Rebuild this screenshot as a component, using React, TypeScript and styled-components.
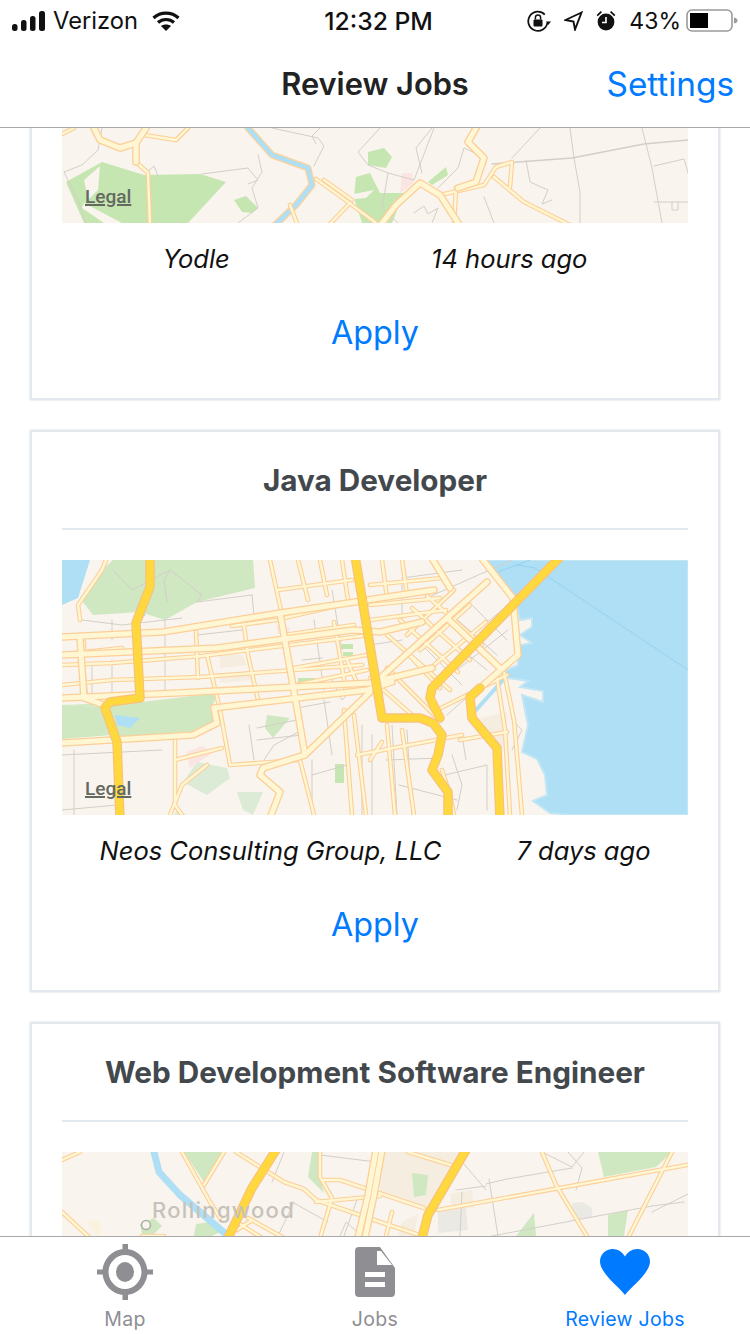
import React from 'react';
import styled, { createGlobalStyle } from 'styled-components';

const UI_FONT = `Inter, "Liberation Sans", sans-serif`;

const GlobalStyle = createGlobalStyle`
  html, body {
    margin: 0;
    padding: 0;
    background: #fff;
  }
  body {
    font-family: ${UI_FONT};
  }
`;

type Pts = number[][];

const toPoints = (line: number[]) => {
  const out: string[] = [];
  for (let i = 0; i < line.length; i += 2) out.push(`${line[i]},${line[i + 1]}`);
  return out.join(' ');
};

const Lines = ({ lines, color, width }: { lines: Pts; color: string; width: number }) => (
  <g fill="none" stroke={color} strokeWidth={width} strokeLinejoin="round" strokeLinecap="round">
    {lines.map((l, i) => (
      <polyline key={i} points={toPoints(l)} />
    ))}
  </g>
);

const Areas = ({ shapes, color }: { shapes: Pts; color: string }) => (
  <g fill={color}>
    {shapes.map((s, i) => (
      <polygon key={i} points={toPoints(s)} />
    ))}
  </g>
);

const Roads = ({ lines, size }: { lines: Pts; size: 'street' | 'main' | 'freeway' }) => {
  if (size === 'freeway') {
    return (
      <>
        <Lines lines={lines} color="#f9c07c" width={9.5} />
        <Lines lines={lines} color="#ffd83e" width={7.2} />
      </>
    );
  }
  return (
    <>
      <Lines lines={lines} color="#fccf98" width={size === 'main' ? 7.6 : 4.6} />
      <Lines lines={lines} color="#fff6d3" width={size === 'main' ? 5 : 2.4} />
    </>
  );
};

const LAND = '#f9f4ed';
const WATER = '#aedff5';
const PARK = '#cfe8c2';
const PARK_BRIGHT = '#c5e6b0';
const PARK_PALE = '#dcebd6';
const TAN = '#f5eee0';
const PINK = '#fbe5e2';
const MINOR = '#d3cfc9';

const MapFrame = styled.div`
  position: relative;
  height: 255px;
  background: ${LAND};
  overflow: hidden;
  svg {
    display: block;
  }
`;

const Legal = styled.span`
  position: absolute;
  left: 23px;
  bottom: 16px;
  font-family: Roboto, sans-serif;
  font-size: 19px;
  font-weight: 500;
  line-height: 21px;
  color: #646a62;
  text-decoration: underline;
  text-decoration-thickness: 2px;
`;

const PlaceName = styled.text`
  font-family: Inter, sans-serif;
  font-size: 22px;
  font-weight: 500;
  letter-spacing: 1.3px;
  fill: #c6c2bb;
`;

const NorthMap = () => (
  <svg width="626" height="255" viewBox="0 0 626 255">
    <Areas
      color={PARK_BRIGHT}
      shapes={[
        [4, 214, 40, 194, 82, 207, 138, 206, 164, 214, 126, 255, 22, 255],
        [306, 184, 322, 180, 330, 189, 324, 200, 306, 197],
        [294, 209, 308, 205, 318, 225, 342, 225, 330, 255, 300, 255, 292, 230],
        [366, 214, 384, 199, 386, 207, 370, 217],
        [172, 232, 184, 228, 196, 240, 190, 245, 180, 244],
      ]}
    />
    <Areas color={LAND} shapes={[[22, 212, 38, 198, 36, 222, 26, 232], [292, 226, 312, 222, 304, 230, 292, 231], [20, 240, 42, 255, 60, 255, 22, 235]]} />
    <Areas color={PINK} shapes={[[340, 205, 350, 205, 352, 215, 338, 225]]} />
    <Lines
      color={MINOR}
      width={1}
      lines={[
        [40, 160, 36, 182, 20, 197, 2, 204, 16, 232, 24, 255],
        [84, 205, 92, 198, 96, 208],
        [140, 206, 186, 200, 196, 212, 186, 216],
        [210, 160, 256, 170, 262, 178, 252, 198],
        [196, 187, 200, 204, 190, 220, 196, 240, 176, 255],
        [258, 160, 250, 168, 254, 176],
        [318, 160, 296, 184, 306, 197, 326, 205, 352, 212, 372, 160],
        [326, 205, 320, 240, 336, 255],
        [370, 160, 354, 180, 360, 205],
        [376, 220, 396, 200, 402, 180, 424, 190],
        [508, 160, 512, 190, 518, 224, 518, 255],
        [464, 192, 468, 214, 486, 222, 480, 236, 490, 232],
        [592, 198, 622, 191, 626, 205],
        [592, 234, 626, 234],
        [610, 234, 610, 242, 616, 242, 616, 234],
        [478, 160, 450, 190],
        [422, 229, 432, 255],
        [352, 245, 362, 238, 366, 246, 376, 240, 370, 255],
        [580, 160, 590, 200, 600, 255],
      ]}
    />
    <Lines color="#d3cfc8" width={1.6} lines={[[430, 196, 510, 190, 582, 176, 626, 172]]} />
    <Lines color="#fdd29c" width={7} lines={[[186, 160, 210, 187, 246, 200, 250, 217, 234, 237, 212, 258]]} />
    <Lines color={WATER} width={4.5} lines={[[186, 160, 210, 187, 246, 200, 250, 217, 234, 237, 212, 258]]} />
    <Roads
      size="street"
      lines={[
        [82, 167, 114, 172, 126, 160],
        [74, 194, 86, 205, 88, 258],
        [254, 211, 286, 234, 318, 258],
        [262, 212, 290, 232],
        [266, 258, 288, 235],
        [236, 258, 228, 237],
        [378, 227, 422, 217, 434, 199, 450, 194, 448, 219],
        [432, 209, 462, 234, 510, 258],
        [394, 220, 392, 258],
        [0, 166, 12, 160],
      ]}
    />
    <Roads
      size="main"
      lines={[
        [32, 160, 38, 172, 58, 180, 74, 175, 84, 160],
        [74, 175, 74, 194],
        [414, 160, 406, 174, 422, 190, 414, 214, 396, 220],
        [318, 258, 334, 237, 358, 215, 378, 227, 398, 258],
      ]}
    />
  </svg>
);

const CityMap = () => (
  <svg width="626" height="255" viewBox="0 0 626 255">
    <Areas
      color={PARK}
      shapes={[
        [51, 0, 191, 0, 193, 28, 135, 42, 103, 60, 78, 52, 31, 55, 18, 38, 38, 12],
        [0, 145, 42, 147, 53, 177, 131, 172, 155, 163, 150, 148, 155, 133, 80, 142],
        [0, 145, 40, 147, 50, 175, 0, 179],
        [205, 155, 228, 158, 211, 178, 203, 168],
      ]}
    />
    <Areas color={PARK_BRIGHT} shapes={[[236, 118, 253, 118, 253, 126, 236, 126], [280, 84, 291, 84, 291, 89, 280, 89], [281, 92, 291, 92, 291, 96, 281, 96], [273, 204, 282, 204, 282, 223, 273, 223]]} />
    <Areas color={PARK_PALE} shapes={[[121, 222, 135, 202, 165, 208, 168, 218, 145, 235], [175, 232, 201, 232, 191, 255, 181, 250], [115, 250, 125, 255, 112, 255]]} />
    <Areas color={TAN} shapes={[[158, 95, 180, 95, 185, 105, 158, 108], [155, 113, 190, 112, 190, 120, 158, 123], [418, 158, 445, 152, 446, 187, 435, 187]]} />
    <Areas color={PINK} shapes={[[214, 65, 228, 68, 226, 76, 216, 74], [124, 192, 140, 186, 152, 192, 128, 208]]} />
    <Areas color={WATER} shapes={[[0, 0, 28, 0, 16, 38, 0, 45], [78, 52, 84, 55, 76, 60], [53, 155, 78, 158, 68, 168, 55, 165]]} />
    <polygon
      fill={WATER}
      stroke="#c2e6f3"
      strokeWidth={2}
      points="425,0 626,0 626,255 508,255 488,253 471,241 485,235 483,215 475,199 460,192 466,165 460,135 481,142 481,131 458,127 466,121 446,118 441,112 456,105 456,95 458,85 470,83 458,75 470,67 470,58 458,60 455,45"
    />
    <Lines color={WATER} width={4} lines={[[414, 150, 442, 119]]} />
    <Lines color="#95d1ef" width={1} lines={[[455, 5, 473, 8, 626, 110], [468, 0, 436, 12]]} />
    <Lines
      color={MINOR}
      width={1}
      lines={[
        [20, 60, 60, 65, 120, 58],
        [50, 60, 50, 80],
        [103, 60, 103, 130],
        [50, 100, 50, 135],
        [135, 75, 180, 70, 190, 60],
        [105, 42, 102, 20, 108, 10, 140, 35, 135, 42],
        [51, 10, 70, 30, 108, 10],
        [190, 35, 192, 55],
        [135, 42, 190, 35],
        [30, 105, 30, 140],
        [0, 195, 100, 190],
        [12, 190, 12, 255],
        [0, 250, 55, 245],
        [195, 168, 235, 160],
        [195, 180, 240, 175],
        [187, 165, 192, 200],
        [202, 200, 212, 185, 240, 170],
        [235, 148, 268, 142],
        [270, 120, 280, 140, 290, 130],
        [240, 100, 260, 98],
        [252, 60, 262, 130],
        [270, 30, 280, 90],
        [250, 200, 250, 255],
        [250, 215, 285, 205],
        [262, 140, 270, 195],
        [300, 165, 300, 255],
        [310, 175, 310, 255],
        [330, 165, 335, 255],
        [345, 170, 350, 255],
        [360, 40, 450, 0],
        [340, 18, 400, 10],
        [340, 80, 308, 85],
        [380, 100, 440, 50],
        [395, 110, 446, 70],
        [360, 85, 400, 125],
        [375, 70, 425, 110],
        [390, 55, 435, 95],
        [405, 40, 445, 80],
        [430, 115, 385, 155],
        [445, 120, 450, 160, 460, 170, 450, 190],
        [390, 195, 400, 225, 395, 250],
        [383, 215, 425, 205, 425, 250],
        [400, 175, 404, 200],
        [337, 225, 395, 240],
        [324, 200, 378, 198],
        [340, 20, 340, 60],
      ]}
    />
    <Roads
      size="street"
      lines={[
        [0, 125, 50, 120, 138, 117, 300, 105],
        [0, 105, 50, 103, 140, 96, 300, 76],
        [22, 82, 22, 92, 60, 88],
        [170, 66, 185, 64, 215, 60],
        [182, 66, 186, 95, 196, 140],
        [134, 72, 136, 118],
        [145, 95, 158, 150, 168, 205, 236, 200],
        [113, 180, 113, 245, 120, 255],
        [113, 200, 160, 188],
        [18, 60, 16, 45, 40, 10, 44, 0],
        [18, 75, 24, 137],
        [208, 0, 220, 55],
        [236, 0, 246, 40],
        [258, 0, 265, 35],
        [280, 0, 286, 40],
        [216, 30, 290, 20],
        [222, 58, 292, 42],
        [272, 62, 284, 130],
        [222, 75, 292, 65],
        [232, 108, 305, 95],
        [234, 125, 305, 110],
        [285, 100, 298, 130],
        [282, 150, 290, 255],
        [292, 155, 304, 255],
        [325, 165, 333, 255],
        [238, 200, 252, 255],
        [340, 170, 352, 255],
        [295, 195, 400, 175],
        [320, 182, 308, 200],
        [308, 25, 380, 18],
        [308, 45, 378, 38],
        [308, 60, 384, 50],
        [320, 0, 325, 38],
        [340, 0, 345, 35],
        [325, 75, 388, 130],
        [338, 60, 396, 112],
        [350, 48, 408, 100],
        [365, 36, 420, 85],
        [392, 30, 345, 75],
        [408, 45, 358, 90],
        [424, 62, 372, 105],
        [325, 108, 372, 155],
        [308, 118, 350, 155],
        [378, 128, 342, 90],
        [375, 150, 445, 115],
        [442, 112, 452, 160, 460, 255],
        [435, 118, 443, 170, 448, 255],
        [380, 210, 388, 235, 392, 255],
        [398, 180, 445, 172],
        [145, 205, 120, 225, 108, 255],
      ]}
    />
    <Roads
      size="main"
      lines={[
        [0, 77, 101, 72, 218, 53, 293, 42, 318, 38, 372, 30],
        [0, 95, 155, 88, 291, 70, 318, 72, 360, 62],
        [0, 138, 115, 133, 308, 123, 370, 108],
        [152, 148, 305, 130, 330, 122],
        [152, 148, 155, 163, 131, 175, 0, 183],
        [18, 78, 22, 138, 42, 145],
        [218, 53, 235, 148, 243, 195, 201, 208, 198, 215, 218, 232, 208, 258],
        [243, 195, 308, 132],
        [421, 0, 451, 38, 456, 95, 418, 128],
        [385, 58, 438, 108],
        [425, 22, 318, 118],
        [371, 0, 388, 28],
      ]}
    />
    <Roads
      size="freeway"
      lines={[
        [88, -4, 88, 27, 74, 63, 78, 138, 48, 142, 43, 148, 55, 182, 58, 258],
        [293, -4, 320, 158, 358, 158, 371, 163, 380, 175, 376, 195, 370, 210, 386, 232, 386, 258],
        [497, -2, 370, 128, 368, 138, 378, 158],
        [418, 128, 408, 137, 410, 158, 435, 188, 438, 258],
      ]}
    />
  </svg>
);

const SouthMap = () => (
  <svg width="626" height="255" viewBox="0 0 626 255">
    <Areas color={TAN} shapes={[[318, 0, 398, 0, 366, 56, 318, 43], [340, 70, 356, 62, 352, 84, 336, 84], [388, 42, 410, 38, 412, 56, 390, 58]]} />
    <Areas
      color={PARK}
      shapes={[
        [122, 0, 162, 0, 142, 30],
        [250, 0, 256, 0, 258, 24, 262, 41, 246, 25],
        [350, 21, 366, 23, 364, 43, 352, 45],
        [536, 0, 610, 0, 594, 15, 542, 25],
        [546, 63, 566, 58, 562, 84, 546, 84],
        [472, 61, 474, 84, 454, 84],
        [134, 72, 148, 70, 158, 80, 150, 84, 132, 84],
        [78, 72, 92, 66, 100, 74, 92, 82, 80, 82],
      ]}
    />
    <Areas color="#ebe9e4" shapes={[[376, 60, 404, 56, 406, 78, 376, 81], [510, 51, 520, 50, 530, 56, 530, 65, 512, 68]]} />
    <Areas color="#faf2dc" shapes={[[24, 70, 36, 68, 40, 80, 36, 84]]} />
    <Lines color={WATER} width={7} lines={[[92, 0, 97, 20, 118, 43, 166, 84]]} />
    <Lines
      color={MINOR}
      width={1}
      lines={[
        [222, 0, 210, 30],
        [230, 50, 266, 70],
        [232, 50, 216, 84],
        [258, 3, 314, 10],
        [296, 45, 282, 84],
        [396, 5, 424, 38],
        [424, 32, 445, 27, 510, 16],
        [427, 27, 436, 84],
        [394, 38, 424, 34],
        [400, 40, 398, 84],
        [430, 84, 530, 65, 590, 54],
        [590, 54, 622, 50],
        [590, 60, 626, 42],
        [506, 0, 520, 16, 514, 38],
        [480, 0, 510, 15, 522, 0],
        [278, 84, 284, 70, 300, 84],
      ]}
    />
    <Roads
      size="street"
      lines={[
        [120, 0, 148, 50, 158, 66],
        [162, 0, 142, 33],
        [174, 0, 222, 30, 242, 37, 254, 48, 318, 70, 360, 84],
        [258, 0, 258, 25, 270, 46, 258, 86],
        [262, 28, 278, 28, 362, 56],
        [346, 0, 392, 14],
        [254, 50, 318, 44],
        [376, 58, 625, 13],
        [480, 0, 494, 33, 526, 86],
        [610, 0, 566, 86],
        [0, 8, 18, 0],
        [0, 60, 28, 86],
        [186, 66, 222, 86],
        [178, 72, 200, 86],
        [175, 78, 190, 68],
        [330, 60, 324, 84],
        [80, 84, 102, 84],
      ]}
    />
    <Roads size="main" lines={[[314, -2, 306, 43, 296, 86], [320, -2, 312, 43, 303, 86]]} />
    <Roads size="freeway" lines={[[214, -2, 190, 36, 166, 86], [404, -2, 366, 63, 360, 86]]} />
    <circle cx="84" cy="73" r="4.5" fill={LAND} stroke="#a9b3a2" strokeWidth="1.6" />
    <PlaceName x="90" y="66">
      Rollingwood
    </PlaceName>
  </svg>
);

const Page = styled.div`
  width: 750px;
  height: 1334px;
  display: flex;
  flex-direction: column;
  overflow: hidden;
  background: #fff;
`;

const StatusBar = styled.div`
  height: 40px;
  flex: none;
  box-sizing: border-box;
  padding: 1px 12px 0 12px;
  position: relative;
  display: flex;
  align-items: center;
  justify-content: space-between;
  font-size: 23.7px;
  color: #111;
`;

const StatusGroup = styled.div<{ $gap?: number }>`
  display: flex;
  align-items: center;
  gap: ${({ $gap }) => $gap ?? 0}px;
`;

const Carrier = styled.span`
  margin: 0 14px 0 8px;
`;

const Clock = styled.span`
  position: absolute;
  left: 7px;
  right: 0;
  text-align: center;
  font-size: 24.7px;
  font-weight: 500;
  pointer-events: none;
`;

const BatteryLevel = styled.span`
  font-size: 23px;
`;

const NavBar = styled.header`
  height: 88px;
  flex: none;
  box-sizing: border-box;
  position: relative;
  display: flex;
  align-items: center;
  justify-content: center;
  border-bottom: 1px solid #a9a9ab;
`;

const NavTitle = styled.h1`
  margin: 0;
  font-size: 30.8px;
  font-weight: 600;
  color: #222;
`;

const NavAction = styled.span`
  position: absolute;
  right: 16px;
  top: 24px;
  font-size: 33.3px;
  line-height: 40px;
  color: #007aff;
`;

const JobList = styled.main`
  flex: 1;
  min-height: 0;
  overflow: hidden;
  display: flex;
  flex-direction: column;
  gap: 30px;
`;

const Card = styled.section<{ $scrolled?: boolean }>`
  flex: none;
  width: 690px;
  height: 562px;
  box-sizing: border-box;
  margin: ${({ $scrolled }) => ($scrolled ? '-290px' : '0')} 30px 0;
  padding: 0 30px;
  background: #fff;
  border: 2px solid #e4e9ef;
  box-shadow: 0 0 2px rgba(190, 200, 212, 0.7);
`;

const CardTitle = styled.h2`
  margin: 0 0 30px;
  height: 96px;
  display: flex;
  align-items: center;
  justify-content: center;
  border-bottom: 2px solid #e1e8ee;
  font-size: 29.7px;
  font-weight: 700;
  color: #43484d;
`;

const MetaRow = styled.div`
  height: 70px;
  display: flex;
  align-items: center;
  justify-content: space-around;
  font-size: 25.5px;
  font-style: italic;
  color: #111;
`;

const ApplyButton = styled.div`
  height: 78px;
  display: flex;
  align-items: center;
  justify-content: center;
  font-size: 32.3px;
  color: #007aff;
`;

const TabBar = styled.nav`
  height: 98px;
  flex: none;
  box-sizing: border-box;
  display: grid;
  grid-template-columns: repeat(3, 250px);
  border-top: 1px solid #a9a9ab;
  background: #fff;
`;

const Tab = styled.div<{ $active?: boolean }>`
  display: flex;
  flex-direction: column;
  align-items: center;
  color: ${({ $active }) => ($active ? '#007aff' : '#8e8e93')};
`;

const TabIcon = styled.div`
  height: 70px;
  display: flex;
  align-items: center;
`;

const TabLabel = styled.span`
  font-size: 19.5px;
  line-height: 24px;
  letter-spacing: 0.3px;
`;

const SignalIcon = () => (
  <svg width="33" height="20" viewBox="0 0 33 20" fill="#111">
    <rect x="0" y="13" width="5.5" height="7" rx="2.5" />
    <rect x="9" y="9" width="5.5" height="11" rx="2.5" />
    <rect x="18" y="5" width="5.5" height="15" rx="2.5" />
    <rect x="27" y="0" width="6" height="20" rx="2.5" />
  </svg>
);

const WifiIcon = () => (
  <svg width="28" height="20" viewBox="0 0 28 20" fill="none" stroke="#111" strokeWidth="3.2">
    <path d="M1.5 7 C8.5 0.5 19.5 0.5 26.5 7" />
    <path d="M6 11.5 C10.5 7.5 17.5 7.5 22 11.5" />
    <path d="M14 20 L9 15 C11.5 13 16.5 13 19 15 Z" fill="#111" stroke="none" />
  </svg>
);

const RotationLockIcon = () => (
  <svg width="24" height="22" viewBox="0 0 24 22" fill="none" stroke="#111" strokeWidth="1.8">
    <path d="M20.4 12.5 A9.6 9.6 0 1 1 17.8 4.6" />
    <path d="M19 11.5 L24 11.5 L21.2 15 Z" fill="#111" stroke="none" />
    <rect x="6.5" y="9.5" width="9" height="7" rx="1" fill="#111" stroke="none" />
    <path d="M8.4 9.5 V7.6 a2.6 2.6 0 0 1 5.2 0 V9.5" strokeWidth="1.5" />
  </svg>
);

const LocationIcon = () => (
  <svg width="19" height="20" viewBox="0 0 19 20" fill="none" stroke="#111" strokeWidth="1.9" strokeLinejoin="miter">
    <path d="M17.5 1.5 L1.5 9 L9.5 10.5 L11 18.5 Z" />
  </svg>
);

const AlarmIcon = () => (
  <svg width="20" height="21" viewBox="0 0 20 21" fill="#111">
    <circle cx="10" cy="12" r="8.4" />
    <path d="M10 7 V12.5 H6" fill="none" stroke="#fff" strokeWidth="1.6" />
    <path d="M0.6 5 L4.8 1 L6 2.2 L1.8 6.2 Z M19.4 5 L15.2 1 L14 2.2 L18.2 6.2 Z" />
  </svg>
);

const BatteryIcon = () => (
  <svg width="52" height="24" viewBox="0 0 52 24">
    <rect x="1" y="1" width="45" height="21" rx="5" fill="none" stroke="#9a9a9a" strokeWidth="1.6" />
    <rect x="4" y="4" width="18" height="15" fill="#000" />
    <path d="M48 8.5 C50.5 9 51.5 10 51.5 11.5 C51.5 13 50.5 14 48 14.5 Z" fill="#9a9a9a" />
  </svg>
);

const MapTabIcon = () => (
  <svg width="56" height="56" viewBox="0 0 56 56" fill="#8e8e93">
    <path
      fillRule="evenodd"
      d="M28 5 C40.5 5 50.5 15.5 50.5 28 C50.5 40.5 40.5 51 28 51 C15.5 51 5.5 40.5 5.5 28 C5.5 15.5 15.5 5 28 5 Z M28 11 C19.5 11 11.5 18.5 11.5 28 C11.5 37.5 19.5 45 28 45 C36.5 45 44.5 37.5 44.5 28 C44.5 18.5 36.5 11 28 11 Z"
    />
    <ellipse cx="28" cy="28" rx="9" ry="10" />
    <rect x="25.5" y="0" width="5.5" height="8" />
    <rect x="25.5" y="48" width="5.5" height="8" />
    <rect x="0" y="25.5" width="8" height="5" />
    <rect x="48" y="25.5" width="8" height="5" />
  </svg>
);

const DocTabIcon = () => (
  <svg width="40" height="50" viewBox="0 0 40 50" fill="#8e8e93">
    <path
      fillRule="evenodd"
      d="M4 0 H25 L40 21 V46 a4 4 0 0 1 -4 4 H4 a4 4 0 0 1 -4 -4 V4 a4 4 0 0 1 4 -4 Z M22 4 V18 H37 L26 4 Z M10 25 V30 H30 V25 Z M10 35 V40 H30 V35 Z"
    />
  </svg>
);

const HeartTabIcon = () => (
  <svg width="50" height="46" viewBox="0 0 50 46" fill="#007aff">
    <path d="M25 46 C19 38 0 24 0 12.5 C0 5 6 0 12.5 0 C18 0 22.5 3 25 7.5 C27.5 3 32 0 37.5 0 C44 0 50 5 50 12.5 C50 24 31 38 25 46 Z" />
  </svg>
);

type Job = {
  id: string;
  title?: string;
  company?: string;
  posted?: string;
  map: React.ReactNode;
  scrolled?: boolean;
  legal?: boolean;
};

const JOBS: Job[] = [
  { id: 'yodle', company: 'Yodle', posted: '14 hours ago', map: <NorthMap />, scrolled: true, legal: true },
  { id: 'neos', title: 'Java Developer', company: 'Neos Consulting Group, LLC', posted: '7 days ago', map: <CityMap />, legal: true },
  { id: 'web', title: 'Web Development Software Engineer', map: <SouthMap /> },
];

const App = () => (
  <Page>
    <GlobalStyle />
    <StatusBar>
      <StatusGroup>
        <SignalIcon />
        <Carrier>Verizon</Carrier>
        <WifiIcon />
      </StatusGroup>
      <Clock>12:32 PM</Clock>
      <StatusGroup $gap={13}>
        <RotationLockIcon />
        <LocationIcon />
        <AlarmIcon />
        <StatusGroup $gap={5}>
          <BatteryLevel>43%</BatteryLevel>
          <BatteryIcon />
        </StatusGroup>
      </StatusGroup>
    </StatusBar>
    <NavBar>
      <NavTitle>Review Jobs</NavTitle>
      <NavAction>Settings</NavAction>
    </NavBar>
    <JobList>
      {JOBS.map((job) => (
        <Card key={job.id} $scrolled={job.scrolled}>
          <CardTitle>{job.title}</CardTitle>
          <MapFrame>
            {job.map}
            {job.legal && <Legal>Legal</Legal>}
          </MapFrame>
          {job.posted && (
            <>
              <MetaRow>
                <span>{job.company}</span>
                <span>{job.posted}</span>
              </MetaRow>
              <ApplyButton>Apply</ApplyButton>
            </>
          )}
        </Card>
      ))}
    </JobList>
    <TabBar>
      <Tab>
        <TabIcon>
          <MapTabIcon />
        </TabIcon>
        <TabLabel>Map</TabLabel>
      </Tab>
      <Tab>
        <TabIcon>
          <DocTabIcon />
        </TabIcon>
        <TabLabel>Jobs</TabLabel>
      </Tab>
      <Tab $active>
        <TabIcon>
          <HeartTabIcon />
        </TabIcon>
        <TabLabel>Review Jobs</TabLabel>
      </Tab>
    </TabBar>
  </Page>
);

export default App;
